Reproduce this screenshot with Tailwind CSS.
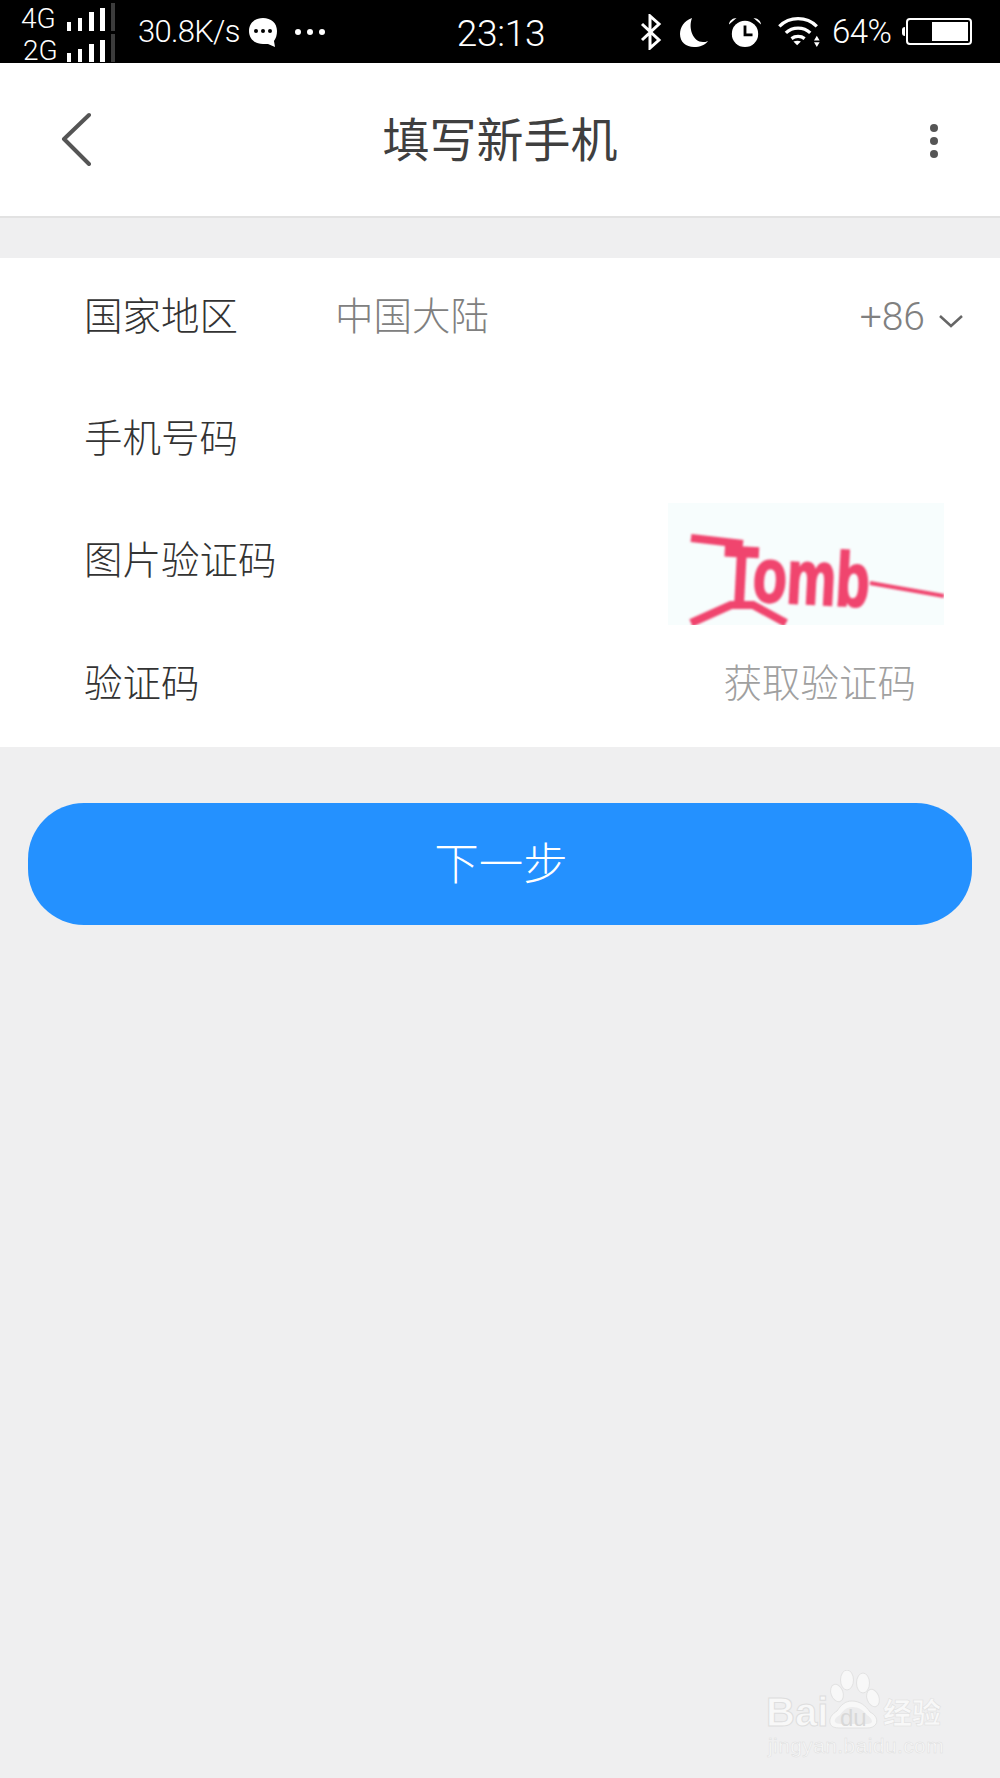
<!DOCTYPE html>
<html lang="zh">
<head>
<meta charset="utf-8">
<script src="https://cdn.jsdelivr.net/npm/@tailwindcss/browser@4"></script>
<title>填写新手机</title>
</head>
<body class="m-0">
<div class="relative w-[1000px] h-[1778px] overflow-hidden bg-[#efeff0] font-['Noto_Sans_CJK_SC','Noto_Sans',sans-serif]">

  <!-- status bar -->
  <div class="flex items-center h-[63px] bg-black text-white font-['Roboto','Noto_Sans_CJK_SC',sans-serif] font-light">
    <div class="relative shrink-0 ml-[21px] w-[96px] h-[63px]">
      <div class="absolute left-0 top-[5px] text-[28px] leading-[28px]">4G</div>
      <div class="absolute left-[2px] top-[37px] text-[28px] leading-[28px]">2G</div>
      <svg class="absolute left-[46px] top-0 w-[50px] h-[63px]" viewBox="0 0 50 63" fill="#fff">
        <rect y="22" width="4" height="9"/><rect x="11" y="18" width="4" height="13"/><rect x="22" y="12" width="5" height="19"/><rect x="33" y="8" width="5" height="23"/>
        <rect y="53" width="4" height="9"/><rect x="11" y="49" width="4" height="13"/><rect x="22" y="44" width="5" height="18"/><rect x="33" y="40" width="5" height="22"/>
        <rect x="44" y="3" width="4" height="28" fill="#3c3c3c"/><rect x="44" y="34" width="4" height="28" fill="#3c3c3c"/>
      </svg>
    </div>
    <span class="shrink-0 ml-[21px] w-[110px] text-[31px] leading-none tracking-[-0.7px]">30.8K/s</span>
    <svg class="shrink-0 w-[30px] h-[32px]" viewBox="0 0 30 32"><path d="M15 2C7 2 1 7 1 15s6 13 14 13c2 0 4 0 5 0l7 3-1-6c2-3 3-6 3-10C29 7 23 2 15 2z" fill="#fff"/><circle cx="8" cy="15" r="2" fill="#000"/><circle cx="15" cy="15" r="2" fill="#000"/><circle cx="22" cy="15" r="2" fill="#000"/></svg>
    <svg class="shrink-0 ml-[15px] w-[34px] h-[10px]" viewBox="0 0 34 10" fill="#fff"><circle cx="5" cy="5" r="3"/><circle cx="17" cy="5" r="3"/><circle cx="29" cy="5" r="3"/></svg>
    <span class="shrink-0 ml-[129px] w-[90px] pt-[3px] text-[37px] leading-none text-center tracking-[-0.3px]">23:13</span>
    <svg class="shrink-0 ml-[94px] w-[22px] h-[36px]" viewBox="0 0 22 36" fill="none" stroke="#fff" stroke-width="3"><path d="M2 10l17 16-9 8V2l9 8L2 26"/></svg>
    <svg class="shrink-0 ml-[18px] w-[28px] h-[30px]" viewBox="0 0 28 30"><path d="M12 1C4 4 0 10 0 17c0 8 6 13 14 13 6 0 11-2 14-6-2 1-3 1-5 1C13 25 8 11 12 1z" fill="#fff"/></svg>
    <svg class="shrink-0 ml-[20px] w-[34px] h-[32px]" viewBox="0 0 36 34"><circle cx="18" cy="19" r="14" fill="#fff"/><path d="M18 10v10h8" fill="none" stroke="#000" stroke-width="3"/><path d="M1 9c0-4 4-7 8-7z M35 9c0-4-4-7-8-7z" fill="#fff"/></svg>
    <svg class="shrink-0 ml-[16px] w-[42px] h-[30px]" viewBox="0 0 44 32" fill="none" stroke="#fff" stroke-width="3.5"><path d="M1 10c11-11 29-11 40 0"/><path d="M8 17c7-7 19-7 26 0"/><path d="M14 23c4-3 10-3 14 0"/><path d="M20 30l-4-4c3-1 6-1 8 0z" fill="#fff" stroke="none"/><path d="M41 20l-3 5h6zM41 32l-3-5h6z" fill="#fff" stroke="none"/></svg>
    <span class="shrink-0 ml-[12px] w-[60px] text-[33px] leading-none tracking-[-0.5px]">64%</span>
    <div class="shrink-0 ml-[10px] flex items-center">
      <div class="w-[3px] h-[9px] rounded-l-sm bg-white"></div>
      <div class="flex justify-end ml-[1px] w-[66px] h-[27px] rounded-[4px] border-[2px] border-white p-[2px]">
        <div class="w-[36px] bg-white"></div>
      </div>
    </div>
  </div>

  <!-- title bar -->
  <div class="flex items-center h-[155px] bg-white border-b-2 border-[#e2e2e2]">
    <div class="flex-1 pl-[60px] pb-[2px]">
      <svg class="w-[32px] h-[54px]" viewBox="0 0 32 54" fill="none" stroke="#555" stroke-width="4" stroke-linecap="round" stroke-linejoin="round"><path d="M29 3L4 27l25 25"/></svg>
    </div>
    <span class="ml-[2px] text-[47px] leading-none pb-[7px] text-[#3f3f3f]">填写新手机</span>
    <div class="flex-1 flex justify-end pr-[62px] pt-[2px]">
      <div class="w-[8px] flex flex-col gap-[5px]">
        <div class="w-[8px] h-[8px] rounded-full bg-[#555]"></div>
        <div class="w-[8px] h-[8px] rounded-full bg-[#555]"></div>
        <div class="w-[8px] h-[8px] rounded-full bg-[#555]"></div>
      </div>
    </div>
  </div>

  <!-- form -->
  <div class="mt-[40px] h-[489px] bg-white flex flex-col text-[38.5px] leading-none text-[#333] font-light">
    <div class="flex items-center h-[122px] pl-[84px] pb-[11px]">
      <span class="w-[251px]">国家地区</span>
      <span class="text-[#808080]">中国大陆</span>
      <span class="ml-auto mt-[7px] text-[#808080] font-['Roboto',sans-serif] text-[39px]">+86</span>
      <svg class="ml-[14px] mr-[37px] mt-[15px] w-[24px] h-[14px]" viewBox="0 0 24 14" fill="none" stroke="#666" stroke-width="2.5"><path d="M1 2l11 10L23 2"/></svg>
    </div>
    <div class="flex items-center h-[122px] pl-[84px] pb-[11px]">
      <span>手机号码</span>
    </div>
    <div class="flex items-center h-[122px] pl-[84px] pb-[11px]">
      <span>图片验证码</span>
      <svg class="ml-auto mr-[56px] mt-[13px] w-[276px] h-[122px] shrink-0" viewBox="0 0 276 122">
        <defs><filter id="soft"><feGaussianBlur stdDeviation="0.9"/></filter></defs>
        <rect width="276" height="122" fill="#f7fdfd"/>
        <g filter="url(#soft)">
          <g fill="none" stroke="#f0456e">
            <path d="M23 35l52 6" stroke-width="8"/>
            <path d="M23 120l40-18h22l33 18" stroke-width="8"/>
            <path d="M202 80l74 13" stroke-width="4"/>
          </g>
          <text x="56" y="100" fill="#f0456e" stroke="#f0456e" stroke-width="2.5" font-family="Liberation Sans, sans-serif" font-size="76" font-weight="700" textLength="146" lengthAdjust="spacingAndGlyphs" transform="rotate(3 130 70)">Tomb</text>
        </g>
      </svg>
    </div>
    <div class="flex items-center h-[123px] pl-[84px] pb-[11px]">
      <span>验证码</span>
      <span class="ml-auto mr-[84px] text-[#a0a0a0]">获取验证码</span>
    </div>
  </div>

  <!-- button -->
  <div class="mt-[56px] mx-[28px] h-[122px] pb-[6px] pl-[2px] rounded-[56px] bg-[#2491ff] flex items-center justify-center text-[44.5px] leading-none text-white font-light">下一步</div>

  <!-- watermark -->
  <div class="absolute left-[766px] top-[1670px] w-[200px] h-[100px]">
    <svg class="absolute left-0 top-0 w-[200px] h-[70px]" viewBox="0 0 200 70">
      <g fill="#f8f8f8" stroke="#e2e2e2" stroke-width="1">
        <ellipse cx="81" cy="10" rx="6.5" ry="10"/>
        <ellipse cx="97" cy="13" rx="6.5" ry="10"/>
        <ellipse cx="71" cy="23" rx="6" ry="9" transform="rotate(-20 71 23)"/>
        <ellipse cx="107" cy="28" rx="6" ry="9" transform="rotate(-20 107 28)"/>
        <path d="M86 31c8 0 14 5 18 11 6 3 8 8 6 12-2 3-5 4-9 4H74c-5 0-9-1-10-5-1-5 2-9 7-12 4-6 8-10 15-10z" stroke-width="1"/>
        <path d="M86 37c-6 0-9 4-12 8-4 2-6 5-5 7 1 1 3 2 6 2h26c3 0 4-1 5-2 0-3-2-5-5-7-4-5-8-8-15-8z" fill="#ececed" stroke="none"/>
      </g>
    </svg>
    <span class="absolute left-0 top-[22px] text-[40px] leading-none font-bold text-[#f8f8f8] font-['Liberation_Sans',sans-serif] [-webkit-text-stroke:1px_#dedede]">Bai</span>
    <span class="absolute left-[74px] top-[36px] text-[24px] leading-none text-[#d8d8d8] font-['Liberation_Sans',sans-serif]">du</span>
    <span class="absolute left-[117px] top-[27px] text-[29px] leading-none font-bold text-[#f8f8f8] [-webkit-text-stroke:0.5px_#dedede]">经验</span>
    <span class="absolute left-[2px] top-[65px] text-[21px] leading-none tracking-[0.4px] text-[#f8f8f8] font-['Liberation_Sans',sans-serif] [-webkit-text-stroke:0.5px_#dedede]">jingyan.baidu.com</span>
  </div>
</div>
</body>
</html>
